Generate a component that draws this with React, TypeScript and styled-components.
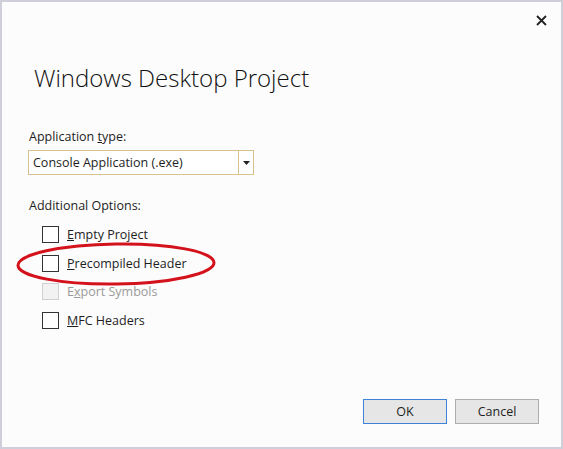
import styled, { createGlobalStyle } from 'styled-components';

const GlobalStyle = createGlobalStyle`
  html, body {
    margin: 0;
    padding: 0;
    background: #fcfcfc;
  }
  * {
    box-sizing: border-box;
  }
`;

const options = [
  { label: 'Empty Project', key: 0, disabled: false },
  { label: 'Precompiled Header', key: 0, disabled: false },
  { label: 'Export Symbols', key: 1, disabled: true },
  { label: 'MFC Headers', key: 0, disabled: false },
];

function AccessLabel({ text, index }: { text: string; index: number }) {
  return (
    <>
      {text.slice(0, index)}
      <u>{text[index]}</u>
      {text.slice(index + 1)}
    </>
  );
}

export default function App() {
  return (
    <>
      <GlobalStyle />
      <DialogWindow>
        <TopBar>
          <CloseButton aria-label="Close">
            <svg width="11" height="11" viewBox="0 0 11 11">
              <path d="M1 1 L10 10 M10 1 L1 10" stroke="#222" strokeWidth="1.8" />
            </svg>
          </CloseButton>
        </TopBar>
        <Content>
          <Title>Windows Desktop Project</Title>
          <FieldLabel>
            <AccessLabel text="Application type:" index={12} />
          </FieldLabel>
          <SelectBox>
            <SelectValue>Console Application (.exe)</SelectValue>
            <SelectArrow>
              <svg width="7" height="4" viewBox="0 0 7 4">
                <path d="M0 0 H7 L3.5 4 Z" fill="#222" />
              </svg>
            </SelectArrow>
          </SelectBox>
          <SectionLabel>Additional Options:</SectionLabel>
          <OptionList>
            {options.map((o) => (
              <OptionRow key={o.label} $disabled={o.disabled}>
                <CheckBox $disabled={o.disabled} />
                <span>
                  <AccessLabel text={o.label} index={o.key} />
                </span>
              </OptionRow>
            ))}
            <Annotation width="204" height="48" viewBox="0 0 204 48">
              <ellipse
                cx="100"
                cy="22"
                rx="98"
                ry="20"
                fill="none"
                stroke="#d3121c"
                strokeWidth="3"
                transform="rotate(-0.8 100 22)"
              />
            </Annotation>
          </OptionList>
        </Content>
        <Footer>
          <DialogButton $primary>OK</DialogButton>
          <DialogButton>Cancel</DialogButton>
        </Footer>
      </DialogWindow>
    </>
  );
}

const DialogWindow = styled.div`
  display: flex;
  flex-direction: column;
  width: 563px;
  height: 449px;
  border: 2px solid #cfcfdc;
  background: #fcfcfc;
  font-family: 'Open Sans', 'Noto Sans', sans-serif;
  color: #1e1e1e;
`;

const TopBar = styled.div`
  display: flex;
  justify-content: flex-end;
  padding: 10px 12px 0 0;
`;

const CloseButton = styled.button`
  display: flex;
  align-items: center;
  justify-content: center;
  width: 16px;
  height: 16px;
  padding: 0;
  border: none;
  background: transparent;
`;

const Content = styled.div`
  position: relative;
  display: flex;
  flex-direction: column;
  padding: 0 0 0 26px;
`;

const Title = styled.h1`
  margin: 34px 0 0 6px;
  font-family: 'Open Sans', 'Noto Sans', sans-serif;
  font-size: 24px;
  font-weight: 300;
  line-height: 32px;
  color: #111;
`;

const FieldLabel = styled.div`
  margin: 34px 0 0 1px;
  font-size: 12.5px;
  line-height: 17px;
`;

const SelectBox = styled.div`
  display: flex;
  width: 226px;
  height: 25px;
  margin-top: 5px;
  border: 1px solid #d9c28f;
  background: #fff;
`;

const SelectValue = styled.div`
  flex: 1;
  display: flex;
  align-items: center;
  padding-left: 4px;
  font-size: 12.5px;
  border-right: 1px solid #d9c28f;
`;

const SelectArrow = styled.div`
  display: flex;
  align-items: center;
  justify-content: center;
  width: 14px;
`;

const SectionLabel = styled.div`
  margin: 22px 0 0 1px;
  font-size: 12.5px;
  line-height: 17px;
`;

const OptionList = styled.div`
  position: relative;
  display: flex;
  flex-direction: column;
  gap: 11.7px;
  margin: 12px 0 0 14px;
`;

const OptionRow = styled.label<{ $disabled?: boolean }>`
  display: flex;
  align-items: center;
  gap: 8px;
  height: 17px;
  font-size: 12.5px;
  color: ${({ $disabled }) => ($disabled ? '#9a9a9a' : '#1e1e1e')};
`;

const CheckBox = styled.span<{ $disabled?: boolean }>`
  width: 17px;
  height: 17px;
  border: 1px solid ${({ $disabled }) => ($disabled ? '#d0d0d0' : '#333')};
  background: ${({ $disabled }) => ($disabled ? '#f2f2f2' : '#fff')};
`;

const Annotation = styled.svg`
  position: absolute;
  left: -26px;
  top: 16px;
  overflow: visible;
`;

const Footer = styled.div`
  display: flex;
  justify-content: flex-end;
  gap: 8px;
  margin-top: auto;
  padding: 0 22px 23px 0;
`;

const DialogButton = styled.button<{ $primary?: boolean }>`
  width: 84px;
  height: 25px;
  padding: 0;
  border: 1px solid ${({ $primary }) => ($primary ? '#3d83d8' : '#adadad')};
  background: #e6e6e6;
  font-family: 'Open Sans', 'Noto Sans', sans-serif;
  font-size: 12.5px;
  color: #1e1e1e;
`;
